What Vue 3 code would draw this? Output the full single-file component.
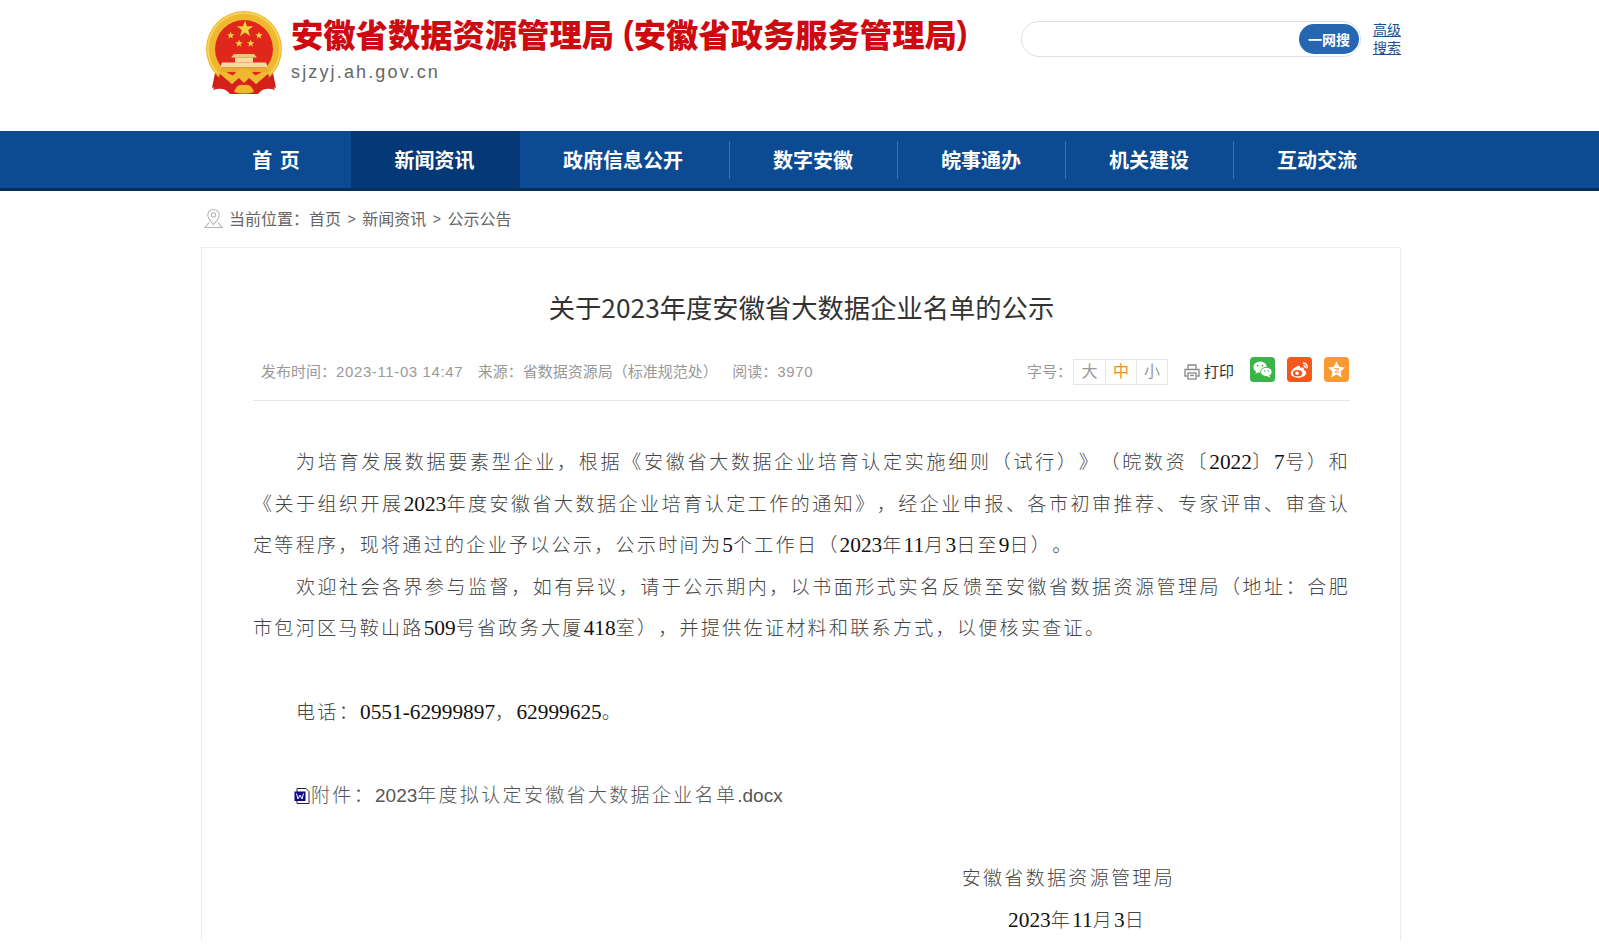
<script setup>
const navItems = [
  { label: '首 页', cls: 'first' },
  { label: '新闻资讯', cls: 'active' },
  { label: '政府信息公开', cls: 'sep wide' },
  { label: '数字安徽', cls: 'sep' },
  { label: '皖事通办', cls: 'sep' },
  { label: '机关建设', cls: 'sep' },
  { label: '互动交流', cls: '' }
]
const lines = [
  { text: '为培育发展数据要素型企业，根据《安徽省大数据企业培育认定实施细则（试行）》（皖数资〔2022〕7号）和', cls: 'just indent' },
  { text: '《关于组织开展2023年度安徽省大数据企业培育认定工作的通知》，经企业申报、各市初审推荐、专家评审、审查认', cls: 'just' },
  { text: '定等程序，现将通过的企业予以公示，公示时间为5个工作日（2023年11月3日至9日）。', cls: '' },
  { text: '欢迎社会各界参与监督，如有异议，请于公示期内，以书面形式实名反馈至安徽省数据资源管理局（地址：合肥', cls: 'just indent' },
  { text: '市包河区马鞍山路509号省政务大厦418室），并提供佐证材料和联系方式，以便核实查证。', cls: '' }
]
const parts = (text) => text.split(/([\d-]+)/).filter(Boolean).map((t) => ({ t, num: /^[\d-]+$/.test(t) }))
</script>

<template>
  <div class="page">
    <header class="head">
      <div class="brand">
        <svg class="emblem" viewBox="0 0 78 84" width="78" height="84">
          <defs>
            <polygon id="st" points="0,-1 .235,-.324 .951,-.309 .380,.124 .588,.809 0,.4 -.588,.809 -.380,.124 -.951,-.309 -.235,-.324" fill="#f5d23c" />
          </defs>
          <path d="M10 58 L6 78 Q16 74 23 82 L53 82 Q60 74 70 78 L66 58Z" fill="#cf1d18" />
          <path d="M12 62l5 16M21 64l3 14M64 62l-5 16M55 64l-3 14" stroke="#f08a5a" stroke-width="1" fill="none" />
          <circle cx="38" cy="39" r="38" fill="#efb92f" />
          <circle cx="38" cy="39" r="36" fill="none" stroke="#f7d669" stroke-width="1.500" />
          <circle cx="38" cy="39" r="29" fill="#e0271c" />
          <use href="#st" transform="translate(39 19) scale(8.500)" />
          <use href="#st" transform="translate(24.700 25.500) scale(4)" />
          <use href="#st" transform="translate(53 25.500) scale(4)" />
          <use href="#st" transform="translate(33 33.500) scale(4)" />
          <use href="#st" transform="translate(44.700 33.500) scale(4)" />
          <path d="M28 44h20l3 3.500H25z" fill="#f4c778" />
          <rect x="29" y="47.500" width="18" height="5" fill="#f7dca0" />
          <path d="M16 52.500h44l2 5H14z" fill="#f4dc9e" />
          <rect x="14" y="57.500" width="48" height="4.500" fill="#e9ac30" />
          <path d="M10 62 Q24 72 30 62 Q38 56 46 62 Q52 72 66 62 L62 72 L14 72Z" fill="#efb92f" />
          <path d="M14 64 L26 74 L33 68 L38 73 L43 68 L50 74 L62 64 L69 80 Q58 76 52 84 L24 84 Q18 76 7 80Z" fill="#d4211a" />
          <path d="M28 82 Q31 73 38 75 Q45 73 48 82 Q38 85 28 82Z" fill="#efb92f" />
          <circle cx="38" cy="66" r="4.500" fill="#efb92f" />
        </svg>
        <div class="brand-text">
          <div class="site-title"><span>安徽省数据资源管理局</span><span class="paren open">(</span><span>安徽省政务服务管理局</span><span class="paren close">)</span></div>
          <div class="domain">sjzyj.ah.gov.cn</div>
        </div>
      </div>
      <div class="search-wrap">
        <div class="search">
          <div class="search-btn">一网搜</div>
        </div>
        <a class="adv">高级<br />搜索</a>
      </div>
    </header>

    <nav class="nav">
      <div class="nav-inner">
        <div v-for="item in navItems" :key="item.label" class="nav-item" :class="item.cls">{{ item.label }}</div>
      </div>
    </nav>

    <main class="wrap">
      <div class="crumb">
        <svg class="pin" viewBox="0 0 20 22" width="19" height="21" fill="none" stroke="#b5b5b5" stroke-width="1.1">
          <path d="M10 1.500c-3.600 0-6 2.700-6 5.800 0 3.600 3.600 7.400 6 10.200 2.400-2.800 6-6.600 6-10.200 0-3.100-2.400-5.800-6-5.800z" />
          <circle cx="10" cy="7.200" r="2.300" />
          <path d="M5.500 15L1 20.500h18L14.500 15" />
        </svg>
        <span>当前位置：首页</span><span class="gt">&gt;</span><span>新闻资讯</span><span class="gt">&gt;</span><span>公示公告</span>
      </div>

      <article class="card">
        <h1 class="art-title">关于2023年度安徽省大数据企业名单的公示</h1>

        <div class="meta">
          <div class="meta-left">
            <span>发布时间：<span class="dig">2023-11-03 14:47</span></span>
            <span>来源：省数据资源局（标准规范处）</span>
            <span>阅读：<span class="dig">3970</span></span>
          </div>
          <div class="meta-right">
            <span class="size-label">字号：</span>
            <div class="sizes">
              <span>大</span><span class="on">中</span><span>小</span>
            </div>
            <div class="print">
              <svg viewBox="0 0 18 18" width="18" height="18" fill="none" stroke="#888" stroke-width="1.3">
                <path d="M5 6V2h8v4M4.500 13H2V6.500h14V13h-2.500" />
                <rect x="5" y="10" width="8" height="6" />
                <path d="M7 12.500h4" />
              </svg>
              <span>打印</span>
            </div>
            <svg class="share" viewBox="0 0 26 26" width="25" height="25">
              <rect width="26" height="26" rx="4" fill="#3bb54a" />
              <ellipse cx="10.500" cy="10.500" rx="7" ry="5.800" fill="#fff" />
              <path d="M6.500 14.500l-.8 3 3.200-1.800z" fill="#fff" />
              <ellipse cx="17" cy="15.500" rx="6" ry="4.800" fill="#fff" stroke="#3bb54a" stroke-width="1" />
              <path d="M20 19l1.200 2.500-3.500-1.700z" fill="#fff" />
              <circle cx="8" cy="9" r="1" fill="#3bb54a" /><circle cx="13" cy="9" r="1" fill="#3bb54a" />
              <circle cx="15" cy="14.500" r=".8" fill="#3bb54a" /><circle cx="19" cy="14.500" r=".8" fill="#3bb54a" />
            </svg>
            <svg class="share" viewBox="0 0 26 26" width="25" height="25">
              <rect width="26" height="26" rx="4" fill="#f4581f" />
              <path d="M11 9.500c-3.600 1.300-7 4.500-7 7.500 0 2.600 3.200 4.500 7.500 4.500 4.900 0 8.500-2.700 8.500-5.200 0-1.700-1.500-2.300-2.400-2.600.5-1.300.3-2.800-1.600-2.800-1.200 0-2.400.7-2.400.7s.5-1.500-.5-2.200c-.5-.3-1.100-.2-2.100.1z" fill="#fff" />
              <ellipse cx="11" cy="16.800" rx="4.800" ry="3.300" fill="#f4581f" />
              <circle cx="10.500" cy="17" r="1.800" fill="#fff" />
              <path d="M17 6.500c2.700-.3 4.600 2 3.800 4.800M17.500 9c1.100-.1 1.700.8 1.400 1.900" fill="none" stroke="#fff" stroke-width="1.400" stroke-linecap="round" />
            </svg>
            <svg class="share" viewBox="0 0 26 26" width="25" height="25">
              <rect width="26" height="26" rx="4" fill="#fb9a32" />
              <path d="M13 4.500l2.700 5.600 6.100.8-4.500 4.200 1.200 6.100-5.500-3-5.500 3 1.200-6.100-4.500-4.200 6.100-.8z" fill="#fff" />
              <path d="M10.500 12.200h5l-4 3.600h4.500" fill="none" stroke="#fb9a32" stroke-width="1" />
            </svg>
          </div>
        </div>

        <div class="content">
          <div v-for="(line, i) in lines" :key="i" :class="line.cls">
            <template v-for="(p, j) in parts(line.text)" :key="j"><span v-if="p.num" class="num">{{ p.t }}</span><template v-else>{{ p.t }}</template></template>
          </div>
          <div class="blank"></div>
          <div class="indent">电话：<span class="num">0551-62999897</span>，<span class="num">62999625</span>。</div>
          <div class="blank"></div>
          <div class="attach">
            <svg viewBox="0 0 16 16" width="16" height="16">
              <path d="M3 .5h9l3 3v12H3z" fill="#fff" stroke="#223" stroke-width="1" />
              <rect x=".5" y="3.500" width="11" height="9.500" fill="#0b0b8a" />
              <path d="M2.500 5.500l1.500 5.500 2-4 2 4 1.500-5.500" fill="none" stroke="#fff" stroke-width="1" />
            </svg>
            <span>附件：<span class="latin">2023</span>年度拟认定安徽省大数据企业名单<span class="latin">.docx</span></span>
          </div>
          <div class="blank"></div>
          <div class="sign a">安徽省数据资源管理局</div>
          <div class="sign b"><span class="num">2023</span>年<span class="num">11</span>月<span class="num">3</span>日</div>
        </div>
      </article>
    </main>
  </div>
</template>

<style>
html, body { margin: 0; padding: 0; overflow: hidden; background: #fff; }
</style>

<style scoped>
.page {
  height: 944px;
  overflow: hidden;
  font-family: "Noto Sans CJK SC", "Liberation Sans", sans-serif;
  color: #333;
  text-spacing-trim: space-all;
}
.head {
  width: 1200px;
  height: 131px;
  margin-left: 201px;
  display: flex;
  justify-content: space-between;
  align-items: flex-start;
  box-sizing: border-box;
}
.brand { display: flex; padding: 10px 0 0 5px; }
.emblem { flex: none; }
.brand-text { margin-left: 7px; padding-top: 1px; }
.site-title {
  display: flex;
  font-size: 32.3px;
  line-height: 44px;
  font-weight: 900;
  color: #cc0a0f;
  white-space: nowrap;
}
.paren { font-family: "Liberation Sans", sans-serif; font-weight: 700; }
.paren.open { margin-left: 9px; }
.domain {
  margin-top: 5px;
  font: 18px/24px "Liberation Sans", sans-serif;
  letter-spacing: 2.15px;
  color: #666;
}
.search-wrap { display: flex; padding-top: 21px; }
.search {
  width: 340px;
  height: 36px;
  box-sizing: border-box;
  border: 1px solid #dcdfe3;
  border-radius: 18px;
  display: flex;
  justify-content: flex-end;
  align-items: center;
  padding-right: 1px;
}
.search-btn {
  width: 60px;
  height: 30px;
  border-radius: 15px;
  background: #2767b2;
  color: #fff;
  font-size: 14px;
  font-weight: 700;
  line-height: 30px;
  text-align: center;
}
.adv {
  margin-left: 12px;
  margin-top: -1px;
  width: 28px;
  font-size: 14px;
  line-height: 18px;
  color: #1f4e8c;
  text-decoration: underline;
  white-space: nowrap;
}
.nav {
  height: 57px;
  background: #0c4a92;
  border-bottom: 3px solid #06315f;
}
.nav-inner {
  width: 1200px;
  height: 100%;
  margin-left: 201px;
  display: flex;
}
.nav-item {
  position: relative;
  box-sizing: border-box;
  height: 57px;
  line-height: 57px;
  padding: 0 45px 0 43px;
  font-size: 20px;
  font-weight: 700;
  color: #fff;
  text-align: center;
  white-space: nowrap;
  flex: none;
}
.nav-item.first { width: 150px; padding: 0; word-spacing: 3px; }
.nav-item.active { width: 169px; padding: 0 2px 0 0; background: #053876; }
.nav-item.wide { padding: 0 47px 0 43px; }
.nav-item.sep::after {
  content: "";
  position: absolute;
  right: 0;
  top: 10px;
  height: 38px;
  width: 1px;
  background: #3f72ab;
}
.wrap { width: 1200px; margin-left: 201px; }
.crumb {
  height: 56px;
  padding: 0 0 2px 3px;
  display: flex;
  align-items: center;
  font-size: 16px;
  color: #666;
  box-sizing: border-box;
}
.pin { margin-right: 6px; flex: none; }
.gt { margin: 2px 6.5px 0; font-family: "Liberation Sans", sans-serif; font-size: 14px; }
.card {
  border: 1px solid #eee;
  border-bottom: 0;
  padding: 0 50px 0 51px;
  box-sizing: border-box;
}
.art-title {
  margin: 0;
  padding-top: 38px;
  font-size: 26.3px;
  line-height: 42px;
  font-weight: 400;
  text-align: center;
  color: #333;
}
.meta {
  margin-top: 29px;
  height: 43px;
  padding-left: 8px;
  display: flex;
  justify-content: space-between;
  border-bottom: 1px solid #e6e6e6;
  font-size: 15px;
  font-family: "Liberation Sans", "Noto Sans CJK SC", sans-serif;
  color: #999;
}
.meta-left { display: flex; gap: 14.5px; padding-top: 2px; line-height: 26px; white-space: nowrap; }
.dig { letter-spacing: .62px; }
.meta-right { display: flex; align-items: flex-start; padding-right: 1px; }
.size-label { line-height: 26px; padding-top: 2px; margin-right: 1px; }
.sizes {
  display: flex;
  margin-top: 2px;
  height: 24px;
  border: 1px solid #e6e6e6;
}
.sizes span {
  width: 31px;
  height: 24px;
  line-height: 24px;
  text-align: center;
  font-size: 16px;
  border-left: 1px solid #e6e6e6;
  box-sizing: border-box;
}
.sizes span:first-child { border-left: 0; }
.sizes .on { color: #f29018; }
.print {
  display: flex;
  align-items: center;
  margin: 3px 16px 0 15px;
  gap: 3px;
  color: #333;
  line-height: 24px;
}
.share { margin: 0 0 0 12px; flex: none; }
.print + .share { margin-left: 0; }
.content {
  padding-top: 41px;
  font-family: "Liberation Serif", "Noto Sans CJK SC", serif;
  font-size: 19px;
  font-weight: 300;
  letter-spacing: 2.33px;
  line-height: 41.6px;
  color: #444;
}
.content > div { white-space: nowrap; }
.num {
  font-size: 21.33px;
  font-weight: 400;
  letter-spacing: 0;
  color: #111;
}
.content > .just { text-align: justify; text-align-last: justify; white-space: normal; }
.indent { padding-left: 43px; }
.blank { height: 41.6px; }
.attach {
  display: flex;
  align-items: center;
  padding-left: 41px;
  color: #555;
}
.latin { font-family: "Liberation Sans", sans-serif; letter-spacing: 0; }
.attach svg { flex: none; margin-right: 1px; }
.sign { text-align: right; }
.sign.a { padding-right: 175px; }
.sign.b { padding-right: 204px; }
</style>
